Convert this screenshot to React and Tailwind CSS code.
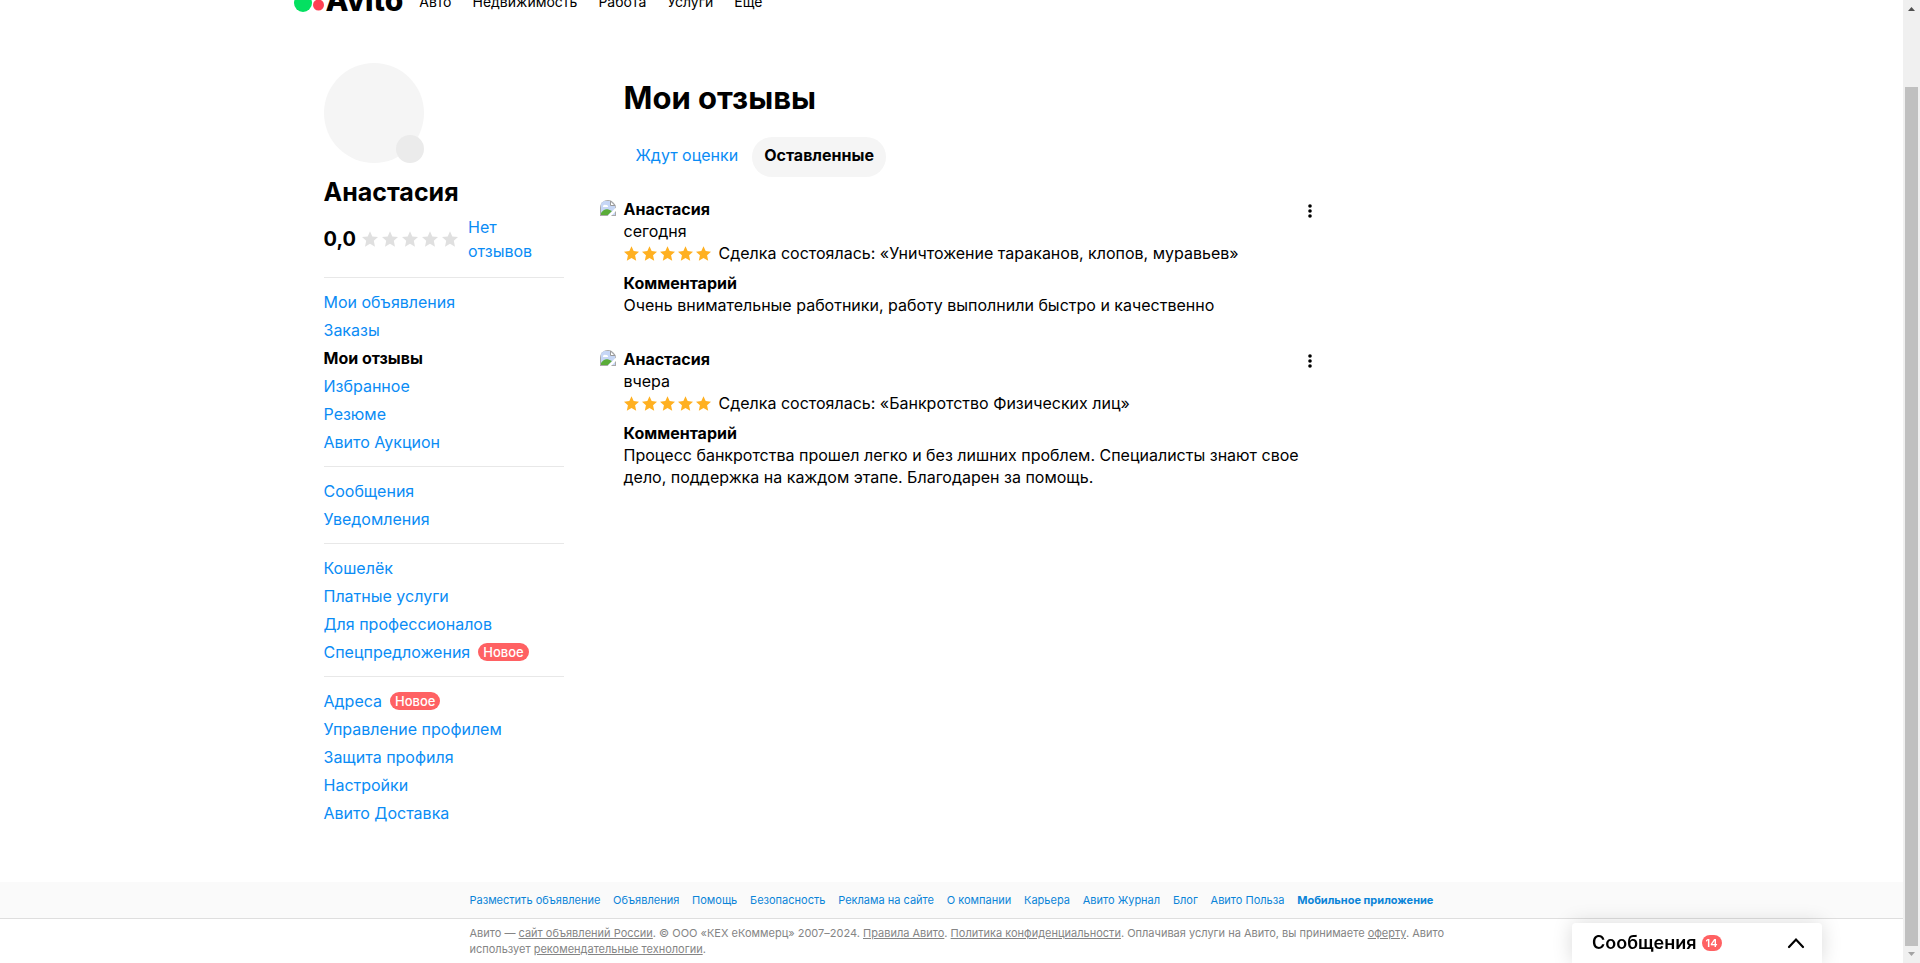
import React, { useState } from 'react';

const topLinks = ['Авто', 'Недвижимость', 'Работа', 'Услуги', 'Ещё'];

const menuGroups = [
  [
    { label: 'Мои объявления' },
    { label: 'Заказы' },
    { label: 'Мои отзывы', active: true },
    { label: 'Избранное' },
    { label: 'Резюме' },
    { label: 'Авито Аукцион' },
  ],
  [{ label: 'Сообщения' }, { label: 'Уведомления' }],
  [
    { label: 'Кошелёк' },
    { label: 'Платные услуги' },
    { label: 'Для профессионалов' },
    { label: 'Спецпредложения', isNew: true },
  ],
  [
    { label: 'Адреса', isNew: true },
    { label: 'Управление профилем' },
    { label: 'Защита профиля' },
    { label: 'Настройки' },
    { label: 'Авито Доставка' },
  ],
];

const tabs = ['Ждут оценки', 'Оставленные'];

const reviews = [
  {
    id: 1,
    author: 'Анастасия',
    date: 'сегодня',
    deal: 'Сделка состоялась: «Уничтожение тараканов, клопов, муравьев»',
    comment: 'Очень внимательные работники, работу выполнили быстро и качественно',
  },
  {
    id: 2,
    author: 'Анастасия',
    date: 'вчера',
    deal: 'Сделка состоялась: «Банкротство Физических лиц»',
    comment:
      'Процесс банкротства прошел легко и без лишних проблем. Специалисты знают свое дело, поддержка на каждом этапе. Благодарен за помощь.',
  },
];

const footerLinks = [
  'Разместить объявление',
  'Объявления',
  'Помощь',
  'Безопасность',
  'Реклама на сайте',
  'О компании',
  'Карьера',
  'Авито Журнал',
  'Блог',
  'Авито Польза',
];

const Star = ({ className }) => (
  <svg viewBox="0 0 16 16" className={className} fill="currentColor" aria-hidden="true">
    <path d="M8 .2l2.300 5.200 5.700.6-4.200 3.800 1.200 5.900L8 12.800l-5 2.900 1.200-5.900L0 6l5.700-.6z" />
  </svg>
);

const BrokenImage = () => (
  <svg viewBox="0 0 16 16" className="size-4 rounded-t-full" role="img" aria-label="Фото">
    <path d="M0 0h11l5 5v11H0z" fill="#a9a9a9" />
    <path d="M1 1h9.500L15 5.500V15H1z" fill="#c6d6f5" />
    <path d="M3 7a2 2 0 0 1 3-2 1.600 1.600 0 0 1 2 2z" fill="#fff" />
    <path d="M1 15v-2c2-3.500 5-4.500 7.500-3.500L12 11l-4 4z" fill="#5aac38" />
    <path d="M16 7.500L7.500 16H11l5-5z" fill="#fff" />
    <path d="M10.500 1v4.500H15z" fill="#fff" stroke="#9a9a9a" strokeWidth="1" />
  </svg>
);

const Header = () => (
  <header className="-mt-[18px] flex h-10 w-full max-w-[1316px] items-center self-center">
    <a href="#" className="flex items-center gap-[2px]" aria-label="Avito">
      <svg viewBox="0 0 30 30" className="size-[30px]" aria-hidden="true">
        <circle cx="9" cy="16" r="9" fill="#04e061" />
        <circle cx="24.500" cy="18" r="5.500" fill="#ff4053" />
        <circle cx="22" cy="6" r="5" fill="#00aaff" />
      </svg>
      <span className="pb-1 text-[30px] leading-8 font-extrabold">Avito</span>
    </a>
    <nav className="ml-4 flex gap-[21px] text-sm">
      {topLinks.map((link) => (
        <a key={link} href="#">{link}</a>
      ))}
    </nav>
  </header>
);

const Sidebar = () => (
  <aside className="w-60 shrink-0">
    <div className="relative size-[100px] rounded-full bg-[#f5f5f5]">
      <span className="absolute right-0 bottom-0 size-7 rounded-full bg-[#ebebeb]" />
    </div>
    <h2 className="mt-[14px] text-[25px] leading-[30px] font-bold">Анастасия</h2>
    <div className="mt-2 flex items-center pb-[14px]">
      <span className="text-xl font-bold">0,0</span>
      <div className="ml-[6px] flex gap-1 text-[#e0e0e0]">
        {[1, 2, 3, 4, 5].map((n) => (
          <Star key={n} className="size-4" />
        ))}
      </div>
      <a href="#" className="ml-[10px] w-20 text-base leading-6 text-[#0a8cf5]">Нет отзывов</a>
    </div>

    {menuGroups.map((group, i) => (
      <ul key={i} className="border-t border-[#e8e8e8] py-[10px]">
        {group.map((item) => (
          <li key={item.label} className="flex h-7 items-center gap-2">
            <a href="#" className={item.active ? 'font-bold' : 'text-[#0a8cf5]'}>{item.label}</a>
            {item.isNew && (
              <span className="rounded-full bg-[#ff6163] px-[5px] text-[13px] leading-[18px] font-medium text-white">
                Новое
              </span>
            )}
          </li>
        ))}
      </ul>
    ))}
  </aside>
);

const Review = ({ review }) => (
  <li className="flex leading-[22px]">
    <div className="w-6 shrink-0 pt-[2px]">
      <BrokenImage />
    </div>
    <div className="flex-1">
      <h3 className="font-bold">{review.author}</h3>
      <p>{review.date}</p>
      <div className="flex items-center gap-2">
        <div className="flex gap-[3px] text-[#ffb021]">
          {[1, 2, 3, 4, 5].map((n) => (
            <Star key={n} className="size-[15px]" />
          ))}
        </div>
        <p>{review.deal}</p>
      </div>
      <h4 className="mt-2 font-bold">Комментарий</h4>
      <p className="-mr-6">{review.comment}</p>
    </div>
    <button type="button" aria-label="Действия" className="flex h-[26px] w-10 shrink-0 items-center justify-center">
      <svg viewBox="0 0 4 14" className="h-[14px] w-1" fill="currentColor">
        <circle cx="2" cy="2" r="1.800" />
        <circle cx="2" cy="7" r="1.800" />
        <circle cx="2" cy="12" r="1.800" />
      </svg>
    </button>
  </li>
);

const Footer = () => (
  <footer className="text-[11px]">
    <div className="border-b border-[#dedede] bg-[#fafafa]">
      <nav className="mx-auto flex h-9 max-w-[964px] items-center justify-between whitespace-nowrap text-[#0a84d8]">
        {footerLinks.map((link) => (
          <a key={link} href="#">{link}</a>
        ))}
        <a href="#" className="font-bold">Мобильное приложение</a>
      </nav>
    </div>
    <div className="mx-auto max-w-[964px] py-[6px] leading-4 text-[#858585]">
      <p className="-mr-6">
        Авито — <a href="#" className="underline">сайт объявлений России</a>. © ООО «КЕХ еКоммерц» 2007–2024.{' '}
        <a href="#" className="underline">Правила Авито</a>.{' '}
        <a href="#" className="underline">Политика конфиденциальности</a>. Оплачивая услуги на Авито, вы принимаете{' '}
        <a href="#" className="underline">оферту</a>. Авито использует{' '}
        <a href="#" className="underline">рекомендательные технологии</a>.
      </p>
    </div>
  </footer>
);

const MessagesPanel = () => (
  <button
    type="button"
    className="fixed right-[98px] bottom-0 flex h-10 w-[250px] items-center rounded-t bg-white pr-[17px] pl-5 shadow-[0_0_20px_rgba(0,0,0,0.15)]"
  >
    <span className="text-lg font-semibold">Сообщения</span>
    <span className="ml-[5px] rounded-full bg-[#ff6163] px-1 text-[11px] leading-4 font-semibold text-white">14</span>
    <svg viewBox="0 0 18 12" className="ml-auto h-3 w-[18px]" fill="none" stroke="currentColor" strokeWidth="2.200" strokeLinecap="round">
      <path d="M2 10l7-7.500L16 10" />
    </svg>
  </button>
);

// Полоса прокрутки страницы
const ScrollTrack = () => (
  <div className="flex w-[17px] shrink-0 flex-col items-center bg-[#f0f0f0]" aria-hidden="true">
    <svg viewBox="0 0 17 17" className="size-[17px]">
      <path d="M5 11h7L8.500 7z" fill="#505050" />
    </svg>
    <div className="mt-[70px] w-[13px] flex-1 bg-[#c0c0c0]" />
    <svg viewBox="0 0 17 17" className="size-[17px]">
      <path d="M5 6h7l-3.500 4z" fill="#a3a3a3" />
    </svg>
  </div>
);

const App = () => {
  const [activeTab, setActiveTab] = useState('Оставленные');

  return (
    <div className="flex h-screen overflow-hidden bg-white font-[Inter,'Noto_Sans',sans-serif] text-base text-black">
      <div className="flex min-w-0 flex-1 flex-col">
        <Header />

        <div className="mx-auto flex w-full max-w-[1256px] flex-1 items-start pt-[41px] pb-11">
          <Sidebar />

          <main className="ml-9 w-[730px] pt-[15px]">
            <h1 className="pl-6 text-[31px] leading-10 font-bold">Мои отзывы</h1>
            <div className="mt-[19px] flex gap-[2px] pl-6" role="tablist">
              {tabs.map((tab) => (
                <button
                  key={tab}
                  type="button"
                  role="tab"
                  aria-selected={tab === activeTab}
                  onClick={() => setActiveTab(tab)}
                  className={
                    tab === activeTab
                      ? 'h-10 rounded-full bg-[#f5f5f5] px-3 pb-1 font-bold'
                      : 'h-10 rounded-full px-3 pb-1 text-[#0a8cf5]'
                  }
                >
                  {tab}
                </button>
              ))}
            </div>
            <ul className="mt-[21px] flex flex-col gap-8">
              {reviews.map((review) => (
                <Review key={review.id} review={review} />
              ))}
            </ul>
          </main>
        </div>

        <Footer />
      </div>

      <ScrollTrack />
      <MessagesPanel />
    </div>
  );
};

export default App;
